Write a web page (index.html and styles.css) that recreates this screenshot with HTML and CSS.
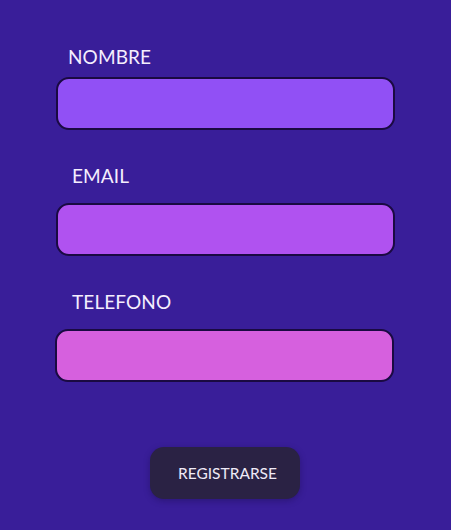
FILE: index.html
```html
<!DOCTYPE html>
<html lang="es">
<head>
<meta charset="utf-8">
<title>Registro</title>
<link rel="stylesheet" href="styles.css">
</head>
<body>
<form class="form">
  <div class="field field--first">
    <label class="label label--nombre" for="nombre">NOMBRE</label>
    <input class="input input--nombre" id="nombre" type="text">
  </div>
  <div class="field">
    <label class="label" for="email">EMAIL</label>
    <input class="input input--email" id="email" type="email">
  </div>
  <div class="field">
    <label class="label" for="tel">TELEFONO</label>
    <input class="input input--tel" id="tel" type="tel">
  </div>
  <div class="actions">
    <button class="btn" type="button">REGISTRARSE</button>
  </div>
</form>
</body>
</html>
```
FILE: styles.css
```css
html, body {
  margin: 0;
  padding: 0;
  background: #391e99;
  height: 100%;
}
body {
  font-family: Lato, "Noto Sans", sans-serif;
  color: #f4eefe;
}
.form {
  display: flex;
  flex-direction: column;
  padding: 45px 0 0 56px;
  width: 339px;
}
.field {
  display: flex;
  flex-direction: column;
  gap: 16px;
  margin-top: 34px;
}
.field--first {
  margin-top: 0;
  gap: 9px;
}
.label {
  font-size: 19px;
  line-height: 23px;
  padding-left: 16px;
  letter-spacing: 0.1px;
}
.label--nombre {
  padding-left: 12px;
}
.input {
  box-sizing: border-box;
  width: 339px;
  height: 53px;
  border: 2px solid #1a0a42;
  border-radius: 13px;
  margin: 0;
  outline: none;
}
.input--nombre { background: #9150f5; }
.input--email { background: #b052f0; }
.input--tel { background: #d660de; margin-left: -1px; }
.actions {
  display: flex;
  justify-content: center;
  margin-top: 65px;
}
.btn {
  width: 150px;
  height: 52px;
  border: none;
  border-radius: 14px;
  background: #2a2244;
  color: #efeaf7;
  font-family: Lato, "Noto Sans", sans-serif;
  font-size: 15.5px;
  padding: 0 0 0 6px;
  margin-left: -2px;
  box-shadow: 0 2px 6px rgba(20, 10, 60, 0.35);
}
```
